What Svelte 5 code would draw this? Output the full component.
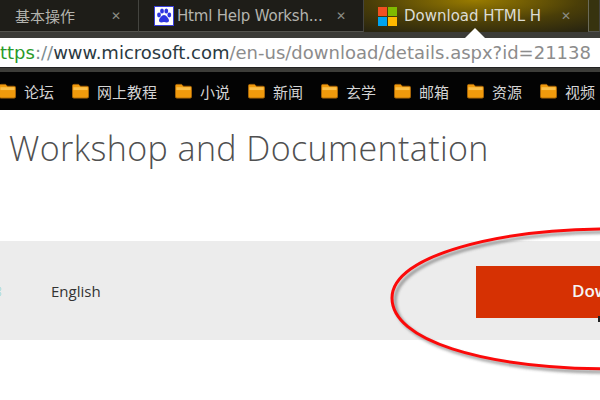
<script>
  const bookmarks = ["论坛", "网上教程", "小说", "新闻", "玄学", "邮箱", "资源", "视频"];
</script>

<div class="page">
  <div class="tabs">
    <div class="tab first">
      <span class="label cjk">基本操作</span>
      <span class="close">✕</span>
    </div>
    <div class="tab second">
      <svg class="fav" viewBox="0 0 20 20">
        <rect width="20" height="20" fill="#fff" />
        <rect x="0.5" y="0.5" width="19" height="19" fill="none" stroke="#3a3fd8" />
        <ellipse cx="5" cy="9" rx="1.9" ry="2.4" fill="#2f36e0" />
        <ellipse cx="8" cy="5" rx="1.9" ry="2.5" fill="#2f36e0" />
        <ellipse cx="12.3" cy="5" rx="1.9" ry="2.5" fill="#2f36e0" />
        <ellipse cx="15.3" cy="9" rx="1.9" ry="2.4" fill="#2f36e0" />
        <path d="M10 9c-2 0-5 3.500-5 5.500s2 2.300 5 1.500c3 .8 5 .5 5-1.500S12 9 10 9z" fill="#2f36e0" />
      </svg>
      <span class="label">Html Help Worksh...</span>
      <span class="close">✕</span>
    </div>
    <div class="tab active">
      <span class="ms">
        <i class="r"></i><i class="g"></i><i class="b"></i><i class="y"></i>
      </span>
      <span class="label">Download HTML H</span>
      <span class="close">✕</span>
      <span class="notch"></span>
    </div>
    <div class="tab rest"></div>
  </div>

  <div class="addressbar">
    <div class="url">
      <span class="green">ttps</span><span class="scheme">://</span><span class="host">www.microsoft.com</span><span class="path">/en-us/download/details.aspx?id=21138</span>
    </div>
  </div>

  <div class="bookmarks">
    {#each bookmarks as b}
      <div class="bookmark">
        <svg class="folder" viewBox="0 0 18 16">
          <path d="M0.500 2.500 Q0.500 1 2 1 H7 L9 3 H16 Q17.500 3 17.500 4.500 V14 Q17.500 15.500 16 15.500 H2 Q0.500 15.500 0.500 14 Z" fill="#f09a0c" stroke="#a8660a" />
          <rect x="1.500" y="4" width="15" height="3" fill="#fbc04a" />
        </svg>
        <span>{b}</span>
      </div>
    {/each}
  </div>

  <h1>Workshop and Documentation</h1>

  <div class="band">
    <span class="lang">English</span>
    <div class="download">Download</div>
  </div>

  <svg class="ring" viewBox="0 0 600 400">
    <defs>
      <filter id="soft" x="-10%" y="-10%" width="120%" height="120%">
        <feGaussianBlur stdDeviation="1.5" />
      </filter>
    </defs>
    <path class="shadow" d="M392 298C392 255 500 229 610 229M392 298C392 340 480 368 610 369" transform="translate(3 3)" filter="url(#soft)" />
    <path class="stroke" d="M392 298C392 255 500 229 610 229M392 298C392 340 480 368 610 369" />
    <path class="cursor" d="M598 316h2v6h-2z" />
    <path class="chevron" d="M0 287l1 2-1 2M0 292l1 2-1 2" />
  </svg>
</div>

<style>
  :global(body) {
    margin: 0;
    background: #fff;
  }

  .page {
    position: relative;
    width: 600px;
    height: 400px;
    overflow: hidden;
    font-family: "Liberation Sans", "Noto Sans CJK SC", sans-serif;
  }

  .tabs {
    display: flex;
    height: 32px;
    background: #1e1d18;
    color: #b4b4ae;
    font-family: "DejaVu Sans", "Noto Sans CJK SC", sans-serif;
    font-size: 15px;
  }

  .tab {
    position: relative;
    display: flex;
    align-items: center;
    box-sizing: border-box;
    border-bottom: 1px solid #55554f;
    border-right: 1px solid #44443f;
  }

  .first {
    width: 139px;
    padding-left: 15px;
  }

  .second {
    width: 225px;
    padding-left: 15px;
  }

  .active {
    width: 224px;
    padding-left: 14px;
    border: 0;
    color: #dcdcd4;
    background: radial-gradient(ellipse 175px 38px at 111px 0, #9a7c00, #4a3e08 60%, #2a2610);
  }

  .rest {
    flex: 1;
    background: #37330f;
    border-left: 1px solid #6a6a58;
  }

  .label {
    white-space: nowrap;
  }

  .cjk {
    width: 96px;
  }

  .close {
    font-size: 12px;
    font-weight: bold;
    color: #8c8c86;
  }

  .second .label {
    width: 159px;
    margin-left: 3px;
    letter-spacing: -0.2px;
  }

  .active .label {
    width: 157px;
    margin-left: 7px;
  }

  .fav {
    width: 20px;
    height: 20px;
  }

  .ms {
    display: grid;
    grid-template-columns: 9px 9px;
    grid-template-rows: 9px 9px;
    gap: 1px;
  }

  .ms .r { background: #f25022; }
  .ms .g { background: #7fba00; }
  .ms .b { background: #00a4ef; }
  .ms .y { background: #ffb900; }

  .notch {
    position: absolute;
    left: 101px;
    bottom: -6px;
    border: 10px solid transparent;
    border-top: 0;
    border-bottom-color: #fff;
  }

  .addressbar {
    box-sizing: border-box;
    height: 40px;
    padding: 6px 0 4px;
    background: #3c3c38;
  }

  .url {
    height: 30px;
    line-height: 29px;
    background: #fff;
    font-family: "DejaVu Sans", sans-serif;
    font-size: 18px;
    white-space: nowrap;
    border-bottom: 1px solid #222;
    box-sizing: border-box;
    color: #8c8c8c;
  }

  .green { color: #2a9a2a; }
  .scheme { color: #7c8c90; }
  .host { color: #2b3a42; }

  .bookmarks {
    display: flex;
    align-items: center;
    height: 38px;
    box-sizing: border-box;
    gap: 18px;
    margin-left: -1px;
    background: #030303;
    color: #d4d4d4;
    font-size: 15px;
    white-space: nowrap;
  }

  .bookmark {
    display: flex;
    align-items: center;
    gap: 8px;
  }

  .folder {
    width: 17px;
    height: 16px;
  }

  h1 {
    margin: 15px 0 0 9px;
    font-family: "Open Sans", sans-serif;
    font-size: 34px;
    line-height: 46px;
    font-weight: 300;
    letter-spacing: 0.4px;
    color: #505050;
    white-space: nowrap;
  }

  .band {
    display: flex;
    align-items: center;
    justify-content: space-between;
    height: 99px;
    margin-top: 70px;
    background: #ececec;
  }

  .lang {
    margin-left: 51px;
    margin-top: 1px;
    font-family: "Open Sans", sans-serif;
    font-size: 15px;
    color: #333;
  }

  .download {
    box-sizing: border-box;
    width: 124px;
    height: 52px;
    margin-top: 3px;
    padding-left: 96px;
    line-height: 50px;
    background: #d63103;
    color: #f5f5f5;
    font-family: "Open Sans", sans-serif;
    font-size: 17px;
    font-weight: 600;
    white-space: nowrap;
    overflow: hidden;
  }

  .ring {
    position: absolute;
    inset: 0;
    width: 600px;
    height: 400px;
  }

  .ring path {
    fill: none;
  }

  .ring .cursor {
    fill: #222;
  }

  .chevron {
    stroke: #a8dcdc;
    stroke-width: 1;
  }

  .shadow {
    stroke: #555;
    stroke-width: 3;
    opacity: 0.6;
  }

  .stroke {
    stroke: #fb0a0a;
    stroke-width: 3;
  }
</style>
